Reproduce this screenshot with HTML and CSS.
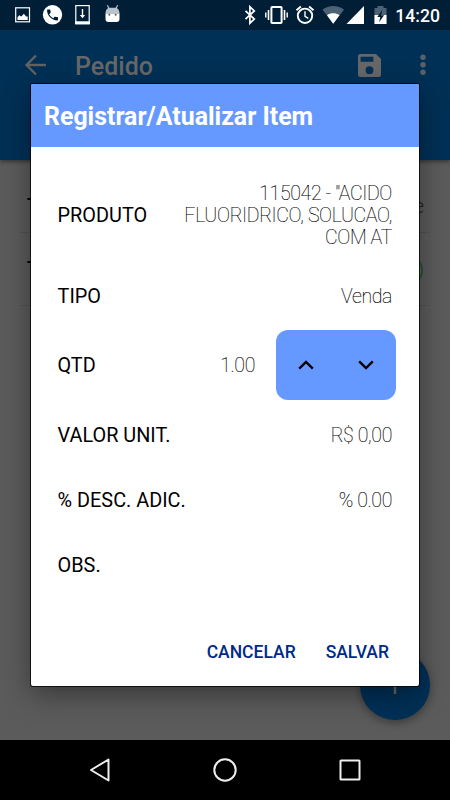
FILE: index.html
```html
<!DOCTYPE html>
<html lang="pt-BR">
<head>
<meta charset="utf-8">
<title>Pedido</title>
<link rel="stylesheet" href="styles.css">
</head>
<body>
<div class="screen">
  <header class="statusbar">
    <svg width="450" height="30" viewBox="0 0 450 30">
      <g fill="none" stroke="#fff" stroke-width="1.2">
        <rect x="15.7" y="7.8" width="13.8" height="14" />
        <rect x="75.8" y="5.6" width="13.4" height="18.2" />
        <path d="M82.500 9v7" stroke-width="1.4"/>
        <path d="M75 22.700h15" stroke-width="2.800"/>
      </g>
      <path d="M17.500 20v-2.800l1.800-2 2 1.200 2.600-2.600 2.200 2.600h1.600V20z" fill="#fff"/>
      <path d="M79.800 15h5.400l-2.700 3.200z" fill="#fff"/>
      <circle cx="52.500" cy="14.800" r="9.700" fill="#fff"/>
      <path transform="translate(45.200 7.600) scale(.61)" d="M6.620 10.790c1.440 2.830 3.760 5.140 6.590 6.590l2.200-2.200c.27-.27.67-.36 1.020-.24 1.120.37 2.330.57 3.570.57.550 0 1 .45 1 1V20c0 .55-.45 1-1 1-9.390 0-17-7.610-17-17 0-.55.450-1 1-1h3.500c.55 0 1 .45 1 1 0 1.250.2 2.450.57 3.570.11.350.03.740-.25 1.020l-2.200 2.200z" fill="#001a30"/>
      <path d="M105.500 13.300h14v5.700a3 3 0 0 1-3 3h-8a3 3 0 0 1-3-3z" fill="#fff"/>
      <path d="M105.500 13.300c0-2.700 1.300-4.500 3-5.500h8c1.700 1 3 2.800 3 5.500z" fill="#b9c3cb"/>
      <path d="M107.300 5.300l2.200 4M117.700 5.300l-2.200 4" stroke="#b9c3cb" stroke-width="1.200"/>
      <circle cx="109.300" cy="14.700" r="1" fill="#52616d"/><circle cx="115.700" cy="14.700" r="1" fill="#52616d"/>
      <path d="M245.500 10.800l8.800 8.300-4.400 4.100V6.800l4.400 4.100-8.800 8.300" fill="none" stroke="#fff" stroke-width="1.700"/>
      <g fill="none" stroke="#fff">
        <rect x="271.400" y="7" width="10.200" height="16" rx=".8" stroke-width="2"/>
        <path d="M268.500 10v10M284.500 10v10" stroke-width="1.600"/>
        <path d="M265.800 12.500v5M287.200 12.500v5" stroke-width="1.400"/>
        <circle cx="305" cy="15.800" r="7.200" stroke-width="1.900"/>
        <path d="M305 11.300v5l3.300 2" stroke-width="1.400"/>
        <path d="M296.500 10.300l4.400-3.700M313.500 10.300l-4.400-3.700" stroke-width="1.900"/>
      </g>
      <path d="M322.500 9.800c6-5 15.500-5 21.500 0L333.200 23.800z" fill="#4d6274"/>
      <path d="M327 15.300c3.700-2.600 8.800-2.600 12.500 0l-6.300 8.500z" fill="#fff"/>
      <path d="M364 6v18h-17.500z" fill="#fff"/>
      <path d="M374.500 8h3V6h6v2h3v16h-12z" fill="#4d6274"/>
      <path d="M374.500 15h12v9h-12z" fill="#fff"/>
      <path d="M382.300 9.800l-5 7.200h3l-1.200 5.200 5-7h-3z" fill="#001a30"/>
    </svg>
    <span class="clock">14:20</span>
  </header>
  <div class="appbar">
    <svg class="back" width="24" height="24" viewBox="0 0 24 24"><path d="M22 12H3M12 2.500L2.500 12l9.500 9.500" fill="none" stroke="#626262" stroke-width="2.300"/></svg>
    <h1>Pedido</h1>
    <svg class="save" width="23" height="23" viewBox="0 0 23 23"><path fill-rule="evenodd" d="M2.500 0H18l5 5v15.500a2.500 2.500 0 0 1-2.500 2.500h-18A2.500 2.500 0 0 1 0 20.500v-18A2.500 2.500 0 0 1 2.500 0zM2.600 2.700v5h12.800v-5zM11.500 12.300a3.900 3.900 0 1 0 0 7.800 3.900 3.900 0 0 0 0-7.800z" fill="#676767"/></svg>
    <svg class="more" width="6" height="22" viewBox="0 0 6 22" fill="#5b6267"><circle cx="3" cy="3.200" r="2.700"/><circle cx="3" cy="10.700" r="2.700"/><circle cx="3" cy="18.200" r="2.700"/></svg>
  </div>
  <main class="list">
    <div class="line first"><b>T</b><span>e</span></div>
    <div class="line"><b>T</b><span class="green">)</span></div>
  </main>
  <div class="fab"><svg width="22" height="22" viewBox="0 0 22 22"><path d="M11 2v18M2 11h18" stroke="#676767" stroke-width="2.500"/></svg></div>
  <section class="dialog">
    <h2>Registrar/Atualizar Item</h2>
    <div class="rows">
      <div class="row product"><label>PRODUTO</label><span class="value">115042 - "ACIDO FLUORIDRICO, SOLUCAO, COM AT</span></div>
      <div class="row"><label>TIPO</label><span class="value">Venda</span></div>
      <div class="row qty"><label>QTD</label><span class="value">1.00</span>
        <div class="stepper">
          <svg width="16" height="10" viewBox="0 0 16 10"><path d="M1.200 8.700L8 1.900l6.800 6.800"/></svg>
          <svg width="16" height="10" viewBox="0 0 16 10"><path d="M1.200 1.300L8 8.100l6.800-6.800"/></svg>
        </div>
      </div>
      <div class="row"><label>VALOR UNIT.</label><span class="value">R$ 0,00</span></div>
      <div class="row"><label>% DESC. ADIC.</label><span class="value">% 0.00</span></div>
      <div class="row"><label>OBS.</label></div>
    </div>
    <div class="actions"><span>CANCELAR</span><span>SALVAR</span></div>
  </section>
  <nav class="navbar">
    <svg width="24" height="26" viewBox="0 0 24 26"><path d="M20.500 2.500v21L3 13z"/></svg>
    <svg width="26" height="26" viewBox="0 0 26 26"><circle cx="13" cy="13" r="10.700"/></svg>
    <svg width="24" height="24" viewBox="0 0 24 24"><rect x="2.500" y="2.500" width="19" height="19" rx=".5"/></svg>
  </nav>
</div>
</body>
</html>
```
FILE: styles.css
```css
* { box-sizing: border-box; }
body { margin: 0; font-family: Roboto, "Liberation Sans", sans-serif; }
.screen {
  position: relative;
  width: 450px;
  height: 800px;
  overflow: hidden;
  display: flex;
  flex-direction: column;
  background: #5b5b5b;
}
svg { display: block; flex: none; }
.statusbar { position: relative; height: 30px; flex: none; background: #001e36; }
.clock {
  position: absolute;
  right: 10px;
  top: 4px;
  font-size: 17.6px;
  line-height: 24px;
  font-weight: 500;
  color: #fff;
}
.appbar {
  height: 130px;
  flex: none;
  display: flex;
  align-items: flex-start;
  padding: 23px 24.500px 0 24px;
  background: #003056;
  box-shadow: 0 2px 4px rgba(0, 0, 0, .4);
}
.appbar .back { margin-right: 27px; }
.appbar h1 {
  margin: -1px auto 0 0;
  font-size: 25px;
  line-height: 30px;
  font-weight: 500;
  color: #676767;
}
.appbar .save { margin: 1px 38.500px 0 0; }
.appbar .more { margin-top: 1px; }
.list { flex: 1; padding: 0 20px; }
.line {
  height: 73px;
  padding: 24px 6px 0 7px;
  display: flex;
  justify-content: space-between;
  border-bottom: 1px solid #525252;
  font-size: 20px;
  line-height: 24px;
}
.line b { font-weight: 500; color: #000; }
.line span { font-weight: 300; color: #222; }
.line .green { color: #0b4a0b; }
.line.first { padding-top: 34px; }
.fab {
  position: absolute;
  left: 360px;
  top: 650px;
  width: 70px;
  height: 70px;
  border-radius: 50%;
  display: grid;
  place-items: center;
  background: #003056;
  box-shadow: 0 3px 8px rgba(0, 0, 0, .35);
}
.dialog {
  position: absolute;
  left: 31px;
  top: 84px;
  width: 388px;
  height: 602px;
  border-radius: 2px;
  overflow: hidden;
  background: #fff;
  box-shadow: 0 0 0 1px rgba(0, 0, 0, .75), 0 8px 28px rgba(0, 0, 0, .4);
}
.dialog h2 {
  margin: 0;
  height: 63px;
  padding: 1px 13px 0;
  font-size: 24.9px;
  line-height: 63px;
  font-weight: 700;
  white-space: nowrap;
  color: #fff;
  background: #6699ff;
}
.rows { padding: 20px 27px 0 26.600px; }
.row {
  height: 65px;
  display: flex;
  align-items: center;
  justify-content: space-between;
  font-size: 20px;
  line-height: 22px;
  color: #000;
}
.row label { padding-top: 2px; font-size: 19.85px; }
.product { height: 96px; }
.qty { height: 74px; }
.value {
  padding-top: 2px;
  font-size: 19.5px;
  font-weight: 100;
  letter-spacing: -.35px;
  text-align: right;
  -webkit-text-stroke: .15px #000;
}
.product .value { width: 215px; }
.qty .value { margin: 0 21px 0 auto; }
.stepper {
  width: 120px;
  height: 70px;
  margin-right: -4px;
  border-radius: 12px;
  display: flex;
  align-items: center;
  justify-content: space-around;
  background: #6699ff;
}
.stepper path { fill: none; stroke: #000; stroke-width: 2.4; }
.actions {
  display: flex;
  justify-content: flex-end;
  gap: 30px;
  padding: 43.500px 30px 0;
  font-size: 17.5px;
  line-height: 22px;
  font-weight: 500;
  color: #002b88;
}
.navbar {
  position: relative;
  height: 60px;
  flex: none;
  display: flex;
  align-items: center;
  justify-content: space-between;
  padding: 0 88px;
  background: #000;
}
.navbar svg * { fill: none; stroke: #eee; stroke-width: 2; stroke-linejoin: round; }
```
